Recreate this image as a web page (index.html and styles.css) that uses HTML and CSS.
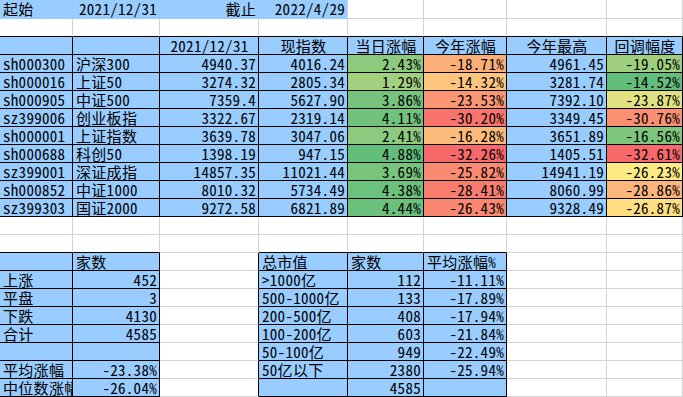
FILE: index.html
```html
<!DOCTYPE html>
<html lang="zh">
<head>
<meta charset="utf-8">
<link rel="stylesheet" href="styles.css">
</head>
<body>
<div class="sheet">
  <!-- row 1 -->
  <div class="c top">起始</div>
  <div class="c top r">2021/12/31</div>
  <div class="c top r">截止</div>
  <div class="c top top-end r">2022/4/29</div>
  <div class="c"></div><div class="c"></div><div class="c"></div><div class="c"></div>
  <!-- row 2 -->
  <div class="c bb"></div><div class="c bb"></div><div class="c bb"></div><div class="c bb"></div>
  <div class="c bb"></div><div class="c bb"></div><div class="c bb"></div><div class="c bb"></div>
  <!-- row 3 header -->
  <div class="c b bl"></div><div class="c b bl"></div>
  <div class="c b bl m">2021/12/31</div>
  <div class="c b bl m">现指数</div>
  <div class="c b bl m">当日涨幅</div>
  <div class="c b bl m">今年涨幅</div>
  <div class="c b bl m">今年最高</div>
  <div class="c b bl m">回调幅度</div>
  <!-- data rows -->
  <div class="c b bl">sh000300</div><div class="c b bl">沪深300</div><div class="c b bl r">4940.37</div><div class="c b bl r">4016.24</div>
  <div class="c b r" style="background:#8ECA7E">2.43%</div><div class="c b r" style="background:#FCAE79">-18.71%</div><div class="c b bl r">4961.45</div><div class="c b r" style="background:#9FCF7E">-19.05%</div>

  <div class="c b bl">sh000016</div><div class="c b bl">上证50</div><div class="c b bl r">3274.32</div><div class="c b bl r">2805.34</div>
  <div class="c b r" style="background:#A2D07F">1.29%</div><div class="c b r" style="background:#FDC57D">-14.32%</div><div class="c b bl r">3281.74</div><div class="c b r" style="background:#63BE7B">-14.52%</div>

  <div class="c b bl">sh000905</div><div class="c b bl">中证500</div><div class="c b bl r">7359.4</div><div class="c b bl r">5627.90</div>
  <div class="c b r" style="background:#75C37C">3.86%</div><div class="c b r" style="background:#FA9674">-23.53%</div><div class="c b bl r">7392.10</div><div class="c b r" style="background:#E0E282">-23.87%</div>

  <div class="c b bl">sz399006</div><div class="c b bl">创业板指</div><div class="c b bl r">3322.67</div><div class="c b bl r">2319.14</div>
  <div class="c b r" style="background:#70C27C">4.11%</div><div class="c b r" style="background:#F9746D">-30.20%</div><div class="c b bl r">3349.45</div><div class="c b r" style="background:#FA8F72">-30.76%</div>

  <div class="c b bl">sh000001</div><div class="c b bl">上证指数</div><div class="c b bl r">3639.78</div><div class="c b bl r">3047.06</div>
  <div class="c b r" style="background:#8ECA7E">2.41%</div><div class="c b r" style="background:#FCBB7B">-16.28%</div><div class="c b bl r">3651.89</div><div class="c b r" style="background:#7EC67D">-16.56%</div>

  <div class="c b bl">sh000688</div><div class="c b bl">科创50</div><div class="c b bl r">1398.19</div><div class="c b bl r">947.15</div>
  <div class="c b r" style="background:#63BE7B">4.88%</div><div class="c b r" style="background:#F8696B">-32.26%</div><div class="c b bl r">1405.51</div><div class="c b r" style="background:#F8696B">-32.61%</div>

  <div class="c b bl">sz399001</div><div class="c b bl">深证成指</div><div class="c b bl r">14857.35</div><div class="c b bl r">11021.44</div>
  <div class="c b r" style="background:#78C47C">3.69%</div><div class="c b r" style="background:#FA8A71">-25.82%</div><div class="c b bl r">14941.19</div><div class="c b r" style="background:#FFEB84">-26.23%</div>

  <div class="c b bl">sh000852</div><div class="c b bl">中证1000</div><div class="c b bl r">8010.32</div><div class="c b bl r">5734.49</div>
  <div class="c b r" style="background:#6CC17C">4.38%</div><div class="c b r" style="background:#F97D6F">-28.41%</div><div class="c b bl r">8060.99</div><div class="c b r" style="background:#FCB57A">-28.86%</div>

  <div class="c b bl">sz399303</div><div class="c b bl">国证2000</div><div class="c b bl r">9272.58</div><div class="c b bl r">6821.89</div>
  <div class="c b r" style="background:#6BC07B">4.44%</div><div class="c b r" style="background:#FA8771">-26.43%</div><div class="c b bl r">9328.49</div><div class="c b r" style="background:#FEDE82">-26.87%</div>
  <!-- row 13 -->
  <div class="c"></div><div class="c"></div><div class="c"></div><div class="c"></div>
  <div class="c"></div><div class="c"></div><div class="c"></div><div class="c"></div>
  <!-- row 14 -->
  <div class="c bb"></div><div class="c bb"></div><div class="c"></div><div class="c bb"></div>
  <div class="c bb"></div><div class="c bb"></div><div class="c"></div><div class="c"></div>
  <!-- row 15 -->
  <div class="c b bl"></div><div class="c b bl">家数</div><div class="c br"></div>
  <div class="c b bl">总市值</div><div class="c b bl">家数</div><div class="c b bl">平均涨幅%</div>
  <div class="c"></div><div class="c"></div>
  <!-- row 16 -->
  <div class="c b bl">上涨</div><div class="c b bl r">452</div><div class="c br"></div>
  <div class="c b bl">&gt;1000亿</div><div class="c b bl r">112</div><div class="c b bl r">-11.11%</div>
  <div class="c"></div><div class="c"></div>
  <!-- row 17 -->
  <div class="c b bl">平盘</div><div class="c b bl r">3</div><div class="c br"></div>
  <div class="c b bl">500-1000亿</div><div class="c b bl r">133</div><div class="c b bl r">-17.89%</div>
  <div class="c"></div><div class="c"></div>
  <!-- row 18 -->
  <div class="c b bl">下跌</div><div class="c b bl r">4130</div><div class="c br"></div>
  <div class="c b bl">200-500亿</div><div class="c b bl r">408</div><div class="c b bl r">-17.94%</div>
  <div class="c"></div><div class="c"></div>
  <!-- row 19 -->
  <div class="c b bl">合计</div><div class="c b bl r">4585</div><div class="c br"></div>
  <div class="c b bl">100-200亿</div><div class="c b bl r">603</div><div class="c b bl r">-21.84%</div>
  <div class="c"></div><div class="c"></div>
  <!-- row 20 -->
  <div class="c b bl"></div><div class="c b bl"></div><div class="c br"></div>
  <div class="c b bl">50-100亿</div><div class="c b bl r">949</div><div class="c b bl r">-22.49%</div>
  <div class="c"></div><div class="c"></div>
  <!-- row 21 -->
  <div class="c b bl">平均涨幅</div><div class="c b bl r">-23.38%</div><div class="c br"></div>
  <div class="c b bl">50亿以下</div><div class="c b bl r">2380</div><div class="c b bl r">-25.94%</div>
  <div class="c"></div><div class="c"></div>
  <!-- row 22 -->
  <div class="c b bl clip">中位数涨幅</div><div class="c b bl r">-26.04%</div><div class="c br"></div>
  <div class="c b bl"></div><div class="c b bl r">4585</div><div class="c b bl"></div>
  <div class="c"></div><div class="c"></div>
</div>
</body>
</html>
```

FILE: styles.css
```css
html, body {
  margin: 0;
  padding: 0;
  background: #ffffff;
}

.sheet {
  display: grid;
  grid-template-columns: 73px 87px 99px 89px 76px 83px 100px 76px;
  grid-template-rows: 19px repeat(21, 18px);
  font-family: "Noto Sans CJK SC", sans-serif;
  font-size: 15px;
  letter-spacing: 0.3px;
  font-feature-settings: "hwid" 1;
  color: #000000;
}

.c {
  box-sizing: border-box;
  border-right: 1px solid #d4d4d4;
  border-bottom: 1px solid #d4d4d4;
  padding: 0 2px 0 3px;
  line-height: 17px;
  white-space: nowrap;
}

.top {
  background: #99ccff;
  border-right-color: #99ccff;
  border-bottom-color: #99ccff;
  line-height: 18px;
}

.top-end {
  border-right-color: #d4d4d4;
}

.bl {
  background: #99ccff;
}

.b {
  border-right-color: #000000;
  border-bottom-color: #000000;
}

.bb {
  border-bottom-color: #000000;
}

.br {
  border-right-color: #000000;
}

.r {
  text-align: right;
}

.m {
  text-align: center;
}

.clip {
  overflow: hidden;
  text-overflow: clip;
}
```
